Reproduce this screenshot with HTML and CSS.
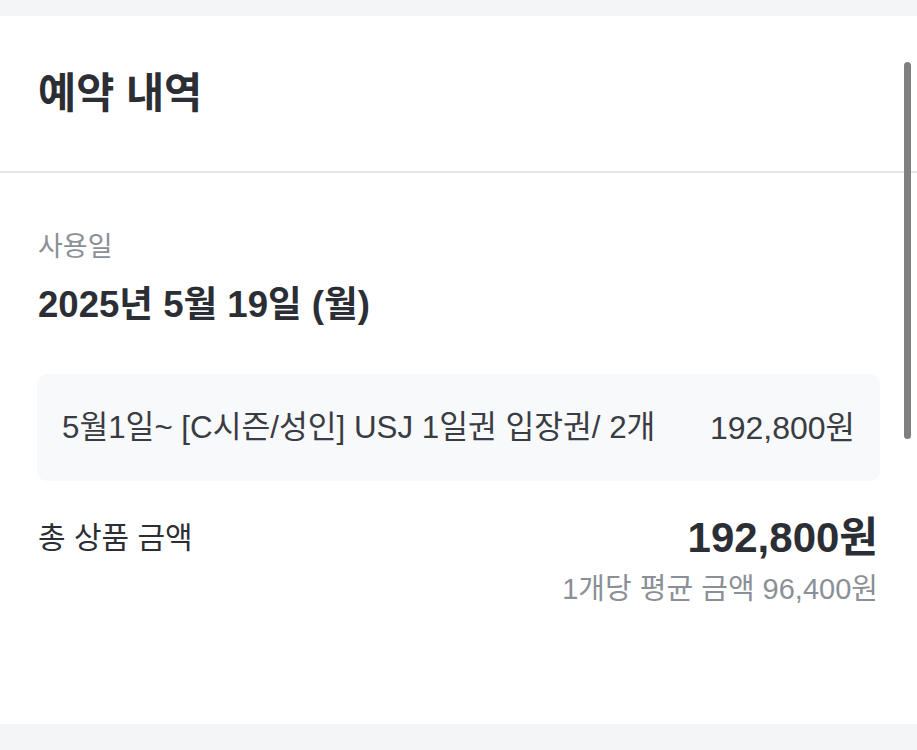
FILE: index.html
```html
<!DOCTYPE html>
<html lang="ko">
<head>
<meta charset="utf-8">
<link rel="stylesheet" href="styles.css">
</head>
<body>
<div class="page">
  <div class="top-gap"></div>
  <section class="card">
    <header class="card-head">
      <h1 class="title">예약 내역</h1>
    </header>
    <div class="card-body">
      <div class="label">사용일</div>
      <div class="date">2025년 5월 19일 (월)</div>
      <div class="item-box">
        <span class="item-name">5월1일~ [C시즌/성인] USJ 1일권 입장권/ 2개</span>
        <span class="item-price">192,800원</span>
      </div>
      <div class="total-row">
        <span class="total-label">총 상품 금액</span>
        <span class="total-price">192,800원</span>
      </div>
      <div class="avg">1개당 평균 금액 96,400원</div>
    </div>
  </section>
  <div class="bottom-gap"></div>
  <div class="scrollbar"></div>
</div>
</body>
</html>
```
FILE: styles.css
```css
* { box-sizing: border-box; margin: 0; padding: 0; }
html, body { width: 917px; height: 750px; overflow: hidden; }
body {
  background: #f4f5f7;
  font-family: "Liberation Sans", "Noto Sans CJK KR", sans-serif;
  color: #2b2e34;
}
.page { position: relative; width: 917px; height: 750px; display: flex; flex-direction: column; }
.top-gap { height: 16px; background: #f4f5f7; }
.card { background: #fff; height: 708px; display: flex; flex-direction: column; }
.bottom-gap { flex: 1; background: #f4f5f7; }
.card-head { height: 157px; border-bottom: 2px solid #e6e7ea; display: flex; align-items: center; padding-left: 38px; }
.title { font-size: 41.5px; font-weight: 700; color: #2b2e34; line-height: 1; }
.card-body { padding: 56px 37px 0 37px; display: flex; flex-direction: column; }
.label { font-size: 27px; color: #8b8f96; line-height: 36px; padding-left: 1px; }
.date { font-size: 36.6px; font-weight: 700; line-height: 44px; margin-top: 18px; padding-left: 1px; }
.item-box {
  margin-top: 47px; height: 107px; background: #f8f9fa; border-radius: 10px;
  display: flex; align-items: center; justify-content: space-between;
  padding: 0 25px 0 25px; font-size: 31.3px; color: #393c42; line-height: 40px;
}
.item-price { font-size: 32px; }
.total-row { margin-top: 32px; display: flex; justify-content: space-between; align-items: center; padding-right: 2px; }
.total-label { font-size: 30px; color: #2b2e34; padding-left: 1px; line-height: 40px; }
.total-price { font-size: 42px; font-weight: 700; line-height: 50px; }
.avg { align-self: flex-end; font-size: 29px; color: #8b8f96; margin-top: 6px; line-height: 40px; padding-right: 2px; }
.scrollbar { position: absolute; left: 904px; top: 62px; width: 7px; height: 377px; border-radius: 4px; background: #808080; }
```
